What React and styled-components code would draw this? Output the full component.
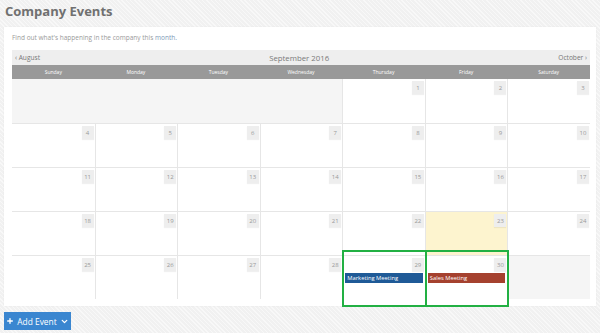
import React from "react";
import styled, { createGlobalStyle } from "styled-components";
import { ChevronDown, Plus } from "lucide-react";

const GlobalStyle = createGlobalStyle`
  html, body {
    margin: 0;
    padding: 0;
  }
  body {
    width: 600px;
    height: 333px;
    overflow: hidden;
    font-family: "Open Sans", "Liberation Sans", sans-serif;
    background-color: #f1f1f1;
    background-image: repeating-linear-gradient(45deg, rgba(255,255,255,0.5) 0 1px, transparent 1px 3px);
  }
`;

const days = ["Sunday", "Monday", "Tuesday", "Wednesday", "Thursday", "Friday", "Saturday"];

// september 2016 starts on a thursday
const cells = [
  null, null, null, null, 1, 2, 3,
  4, 5, 6, 7, 8, 9, 10,
  11, 12, 13, 14, 15, 16, 17,
  18, 19, 20, 21, 22, 23, 24,
  25, 26, 27, 28, 29, 30, null,
];

const events = {
  29: { title: "Marketing Meeting", color: "#1f5a97" },
  30: { title: "Sales Meeting", color: "#a5412f" },
};

const TODAY = 23;
const HIGHLIGHTED = [29, 30];

export default function App() {
  return (
    <Page>
      <GlobalStyle />
      <Title>Company Events</Title>
      <Panel>
        <Intro>
          Find out what's happening in the company this <Link>month.</Link>
        </Intro>
        <Calendar>
          <MonthBar>
            <NavLink>‹ August</NavLink>
            <Month>September 2016</Month>
            <NavLink>October ›</NavLink>
          </MonthBar>
          <Grid>
            {days.map((d) => (
              <DayName key={d}>{d}</DayName>
            ))}
            {cells.map((n, i) => (
              <Cell
                key={i}
                $empty={n === null}
                $today={n === TODAY}
                $first={i % 7 === 0}
                $top={i < 7}
              >
                {n !== null && <DateNum>{n}</DateNum>}
                {events[n] && <Event $color={events[n].color}>{events[n].title}</Event>}
                {HIGHLIGHTED.includes(n) && <Highlight />}
              </Cell>
            ))}
          </Grid>
        </Calendar>
      </Panel>
      <AddButton>
        <Plus size={8} strokeWidth={4} />
        Add Event
        <ChevronDown size={9} strokeWidth={3.5} />
      </AddButton>
    </Page>
  );
}

const Page = styled.div`
  padding: 1px 4px 0 4px;
`;

const Title = styled.h1`
  margin: 0 0 6px 1px;
  font-size: 13px;
  line-height: 20px;
  font-weight: 700;
  color: #707070;
`;

const Panel = styled.div`
  width: 578px;
  background: #fff;
  padding: 6px 6px 7px 8px;
  box-shadow: 0 0 1px rgba(0, 0, 0, 0.08);
`;

const Intro = styled.p`
  margin: 0 0 7px 0;
  font-size: 6.5px;
  line-height: 10px;
  color: #9a9a9a;
`;

const Link = styled.span`
  color: #7d99b8;
`;

const Calendar = styled.div`
  width: 578px;
`;

const MonthBar = styled.div`
  height: 15px;
  background: #eeeeee;
  display: flex;
  align-items: center;
  justify-content: space-between;
  padding: 0 3px;
  color: #777;
`;

const NavLink = styled.span`
  font-size: 6.6px;
`;

const Month = styled.span`
  font-size: 7.8px;
  color: #7a7a7a;
`;

const Grid = styled.div`
  display: grid;
  grid-template-columns: repeat(7, 1fr);
  grid-auto-rows: 44px;
  grid-template-rows: 14px;
`;

const DayName = styled.div`
  background: #999999;
  color: #fff;
  font-size: 5px;
  display: flex;
  align-items: center;
  justify-content: center;
`;

const Cell = styled.div`
  position: relative;
  display: flex;
  flex-direction: column;
  align-items: flex-end;
  padding: 2px 1px 0 2px;
  background: ${(p) => (p.$empty ? "#f5f5f5" : p.$today ? "#fdf4cf" : "#fff")};
  border-top: ${(p) => (p.$top ? "none" : "1px solid #e6e6e6")};
  border-left: ${(p) => (p.$first || p.$empty ? "none" : "1px solid #e6e6e6")};
`;

const DateNum = styled.span`
  width: 12px;
  height: 13px;
  background: #eeeeee;
  color: #999;
  font-size: 6px;
  display: flex;
  align-items: center;
  justify-content: center;
  box-shadow: 0 1px 1px rgba(0, 0, 0, 0.06);
`;

const Event = styled.div`
  align-self: stretch;
  margin: 2px 1px 0 0;
  height: 10px;
  background: ${(p) => p.$color};
  color: #fff;
  font-size: 5.8px;
  line-height: 10px;
  padding-left: 2px;
  white-space: nowrap;
`;

const Highlight = styled.span`
  position: absolute;
  top: -6px;
  bottom: -8px;
  left: -1px;
  right: -2px;
  border: 2px solid #22b043;
  pointer-events: none;
  z-index: 2;
`;

const AddButton = styled.button`
  margin-top: 6px;
  height: 18px;
  width: 67px;
  border: none;
  background: #3a86d0;
  color: #fff;
  font-family: "Open Sans", "Liberation Sans", sans-serif;
  font-size: 8.4px;
  display: flex;
  align-items: center;
  justify-content: center;
  gap: 3px;
  padding: 0;
`;
